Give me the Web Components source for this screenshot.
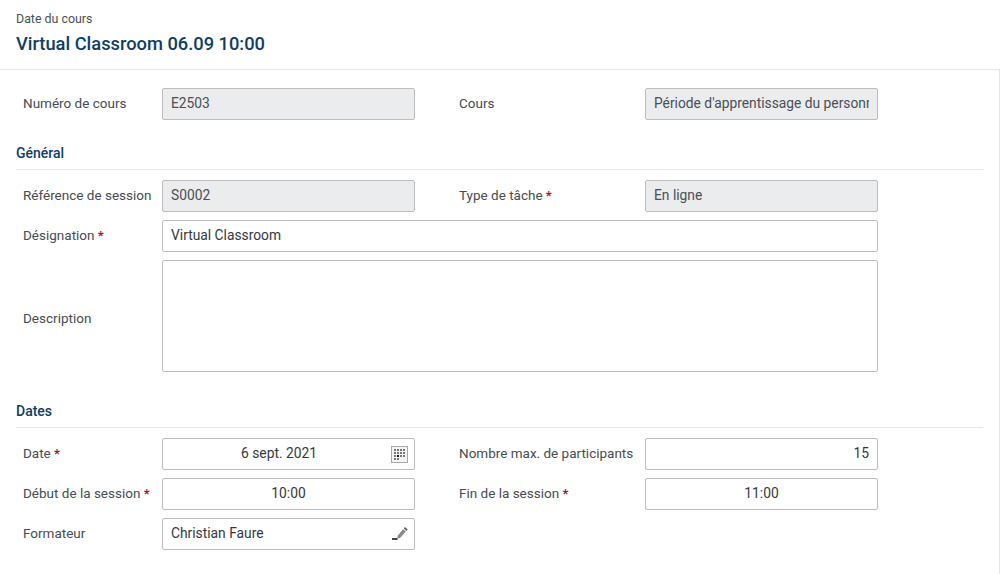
<!DOCTYPE html>
<html lang="fr">
<head>
<title>Date du cours</title>
<style>
    body { margin: 0; background: #fff; font-family: Roboto, "Noto Sans", sans-serif; font-size: 13.5px; color: #3f444a; }
</style>
</head>
<body>

<sheet-header kicker="Date du cours">Virtual Classroom 06.09 10:00</sheet-header>
<sheet-body>
    <form-grid>
        <form-field label="Numéro de cours" kind="readonly">E2503</form-field>
        <form-field label="Cours" kind="readonly" second>Période d'apprentissage du personnel</form-field>
    </form-grid>

    <form-section heading="Général" style="--section-gap: 25px">
        <form-grid>
            <form-field label="Référence de session" kind="readonly">S0002</form-field>
            <form-field label="Type de tâche" required kind="readonly" second>En ligne</form-field>
            <form-field label="Désignation" required wide>Virtual Classroom</form-field>
            <form-field label="Description" wide tall></form-field>
        </form-grid>
    </form-section>

    <form-section heading="Dates" style="--section-gap: 31px">
        <form-grid>
            <form-field label="Date" required text="center" icon="calendar">6 sept. 2021</form-field>
            <form-field label="Nombre max. de participants" second text="right">15</form-field>
            <form-field label="Début de la session" required text="center">10:00</form-field>
            <form-field label="Fin de la session" required second text="center">11:00</form-field>
            <form-field label="Formateur" icon="pencil">Christian Faure</form-field>
        </form-grid>
    </form-section>
</sheet-body>

<script>
    const ICONS = {
        calendar: `<svg width="17" height="17" viewBox="0 0 17 17">
            <rect x=".5" y=".5" width="16" height="16" fill="#f4f4f4" stroke="#a9a9a9"/>
            <path fill="#777" d="M3 3h2v2H3zM6 3h2v2H6zM9 3h2v2H9zM12 3h2v2h-2zM3 6h2v2H3zM6 6h2v2H6zM9 6h2v2H9zM12 6h2v2h-2zM3 9h2v2H3zM9 9h2v2H9zM12 9h2v2h-2zM3 12h2v2H3zM6 12h2v2H6z"/>
            <rect x="6" y="9" width="2" height="2" fill="#111"/>
        </svg>`,
        pencil: `<svg width="17" height="17" viewBox="0 0 17 17">
            <path fill="#444" d="M1 12h5.5v2H1z"/>
            <path fill="#666" d="M14 1l2.8 2.4-1.3 1.5-2.8-2.4z"/>
            <path fill="#888" d="M12 3.2l2.8 2.4-5.6 6.1-3.2 1.3.9-3.4z"/>
        </svg>`
    };

    class SheetHeader extends HTMLElement {
        constructor() {
            super();
            this.attachShadow({mode: 'open'});
            this.shadowRoot.innerHTML = `<style>
                :host { display: block; height: 69px; padding: 0 16px; border-bottom: 1px solid #e6e6e6; }
                .kicker { padding-top: 10px; font-size: 12.4px; line-height: 18px; color: #4a4f55; }
                h1 { margin: 6px 0 0; font-size: 18.3px; line-height: 20px; font-weight: 500; color: #0f3d63; }
            </style>
            <div class="kicker"></div>
            <h1><slot></slot></h1>`;
            this.shadowRoot.querySelector('.kicker').textContent = this.getAttribute('kicker');
        }
    }

    class SheetBody extends HTMLElement {
        constructor() {
            super();
            this.attachShadow({mode: 'open'});
            this.shadowRoot.innerHTML = `<style>
                :host { display: block; height: 504px; box-sizing: border-box; padding: 18px 16px 0; border-right: 1px solid #e6e6e6; }
            </style>
            <slot></slot>`;
        }
    }

    class FormSection extends HTMLElement {
        constructor() {
            super();
            this.attachShadow({mode: 'open'});
            this.shadowRoot.innerHTML = `<style>
                :host { display: block; margin-top: var(--section-gap, 24px); }
                h2 { margin: 0 0 10px; height: 24px; font-size: 14px; line-height: 16px; font-weight: 500; color: #0f3d63; border-bottom: 1px solid #e6e6e6; }
            </style>
            <h2></h2>
            <slot></slot>`;
            this.shadowRoot.querySelector('h2').textContent = this.getAttribute('heading');
        }
    }

    class FormGrid extends HTMLElement {
        constructor() {
            super();
            this.attachShadow({mode: 'open'});
            this.shadowRoot.innerHTML = `<style>
                :host { display: grid; grid-template-columns: 146px 253px 44px 186px 233px; row-gap: 8px; align-items: center; }
            </style>
            <slot></slot>`;
        }
    }

    class FormField extends HTMLElement {
        constructor() {
            super();
            this.attachShadow({mode: 'open'});
            this.shadowRoot.innerHTML = `<style>
                :host { display: contents; }
                .label { grid-column: 1; padding: 0 0 2px 7px; color: #474c52; white-space: nowrap; }
                :host([second]) .label { grid-column: 4; padding-left: 0; }
                :host([tall]) .label { padding-top: 4px; padding-bottom: 0; }
                .req { color: #a3122f; font-weight: 700; font-size: 13px; }
                .control { display: flex; align-items: center; box-sizing: border-box; height: 32px; padding: 0 8px; min-width: 0;
                    background: #fff; border: 1px solid #bdbdbd; border-radius: 2px; color: #33383e; font-size: 13.8px; }
                :host([kind="readonly"]) .control { background: #ebecee; color: #4a4f55; }
                :host([wide]) .control { grid-column: 2 / 6; }
                :host([tall]) .control { height: 112px; }
                .value { flex: 1; min-width: 0; overflow: hidden; white-space: nowrap; padding-bottom: 2px; }
                :host([text="center"]) .value { text-align: center; }
                :host([text="right"]) .value { text-align: right; }
                svg { display: block; flex: none; margin: 0 -2px 0 4px; }
            </style>
            <div class="label"></div>
            <div class="control"><div class="value"><slot></slot></div></div>`;
            const label = this.shadowRoot.querySelector('.label');
            label.textContent = this.getAttribute('label');
            if (this.hasAttribute('required')) {
                const star = document.createElement('span');
                star.className = 'req';
                star.textContent = ' *';
                label.appendChild(star);
            }
            const icon = this.getAttribute('icon');
            if (icon) {
                this.shadowRoot.querySelector('.control').insertAdjacentHTML('beforeend', ICONS[icon]);
            }
        }
    }

    customElements.define('sheet-header', SheetHeader);
    customElements.define('sheet-body', SheetBody);
    customElements.define('form-section', FormSection);
    customElements.define('form-grid', FormGrid);
    customElements.define('form-field', FormField);
</script>
</body>
</html>
